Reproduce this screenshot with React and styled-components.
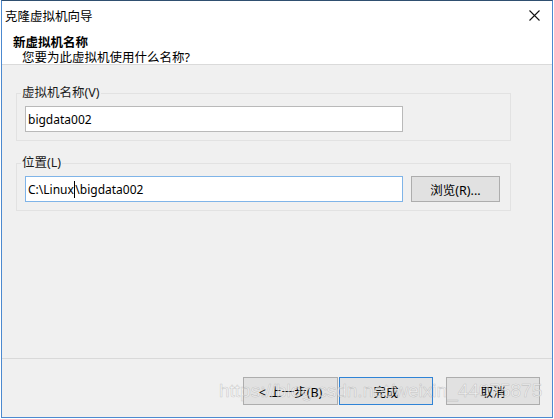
import React from "react";
import styled, { createGlobalStyle } from "styled-components";

const Global = createGlobalStyle`
  html, body { margin: 0; padding: 0; background: #ffffff; }
  body { font-family: "Noto Sans CJK SC", "Noto Sans", sans-serif; }
  * { box-sizing: border-box; }
`;

const cjk = `"Noto Sans", "Noto Sans CJK SC", sans-serif`;

const Window = styled.div`
  position: relative;
  width: 552px;
  height: 418px;
  margin-left: 1px;
  border: 1px solid #4c89cf;
  border-top-color: #2f4f70;
  display: flex;
  flex-direction: column;
  background: #f0f0f0;
  font-family: ${cjk};
  color: #000;
  overflow: hidden;
`;

const TitleBar = styled.div`
  height: 29px;
  flex: none;
  background: #fff;
  display: flex;
  align-items: center;
  justify-content: space-between;
  padding: 0 10px 1px 3px;
  font-size: 12.5px;
`;

const CloseBtn = styled.div`
  width: 12px;
  height: 12px;
  display: flex;
  align-items: center;
  justify-content: center;
  margin-right: 2px;
`;

const Header = styled.div`
  height: 35px;
  flex: none;
  background: #fff;
  border-bottom: 1px solid #dadada;
  display: flex;
  flex-direction: column;
  padding: 5px 0 0 11px;
`;

const HeadTitle = styled.div`
  font-size: 12.5px;
  font-weight: 700;
  line-height: 15px;
`;

const HeadSub = styled.div`
  font-size: 12.5px;
  line-height: 15px;
  padding-left: 9px;
`;

const Body = styled.div`
  flex: 1;
  display: flex;
  flex-direction: column;
  gap: 15px;
  padding: 21px 0 0 14px;
`;

const Group = styled.fieldset`
  margin: 0;
  width: 495px;
  border: 1px solid #e2e2e2;
  padding: 6px 8px 8px 8px;
  display: flex;
  align-items: center;
  gap: 8px;
`;

const Legend = styled.legend`
  font-size: 12.5px;
  line-height: 14px;
  padding: 0 1px;
  margin-left: -4px;
  color: #1a1a1a;
`;

const Input = styled.div`
  width: 378px;
  height: 26px;
  background: #fff;
  border: 1px solid ${(p) => (p.$focused ? "#7fb4e8" : "#b9b9b9")};
  padding: 0 2px;
  display: flex;
  align-items: center;
  font-family: "Noto Sans", sans-serif;
  font-size: 12px;
  white-space: pre;
`;

const Caret = styled.span`
  display: inline-block;
  width: 1px;
  height: 17px;
  background: #000;
  margin: 0 0 0 0.5px;
`;

const Button = styled.div`
  width: ${(p) => p.$w || 94}px;
  height: 28px;
  flex: none;
  background: #e1e1e1;
  border: 1px solid ${(p) => (p.$default ? "#2f83d6" : "#adadad")};
  display: flex;
  align-items: center;
  justify-content: center;
  font-size: 12.5px;
  font-family: ${cjk};
`;

const BrowseButton = styled(Button)`
  height: 26px;
`;

const Footer = styled.div`
  height: 59px;
  flex: none;
  border-top: 1px solid #d9d9d9;
  display: flex;
  justify-content: flex-end;
  align-items: flex-start;
  padding: 18px 12px 0 0;
`;

const ButtonPair = styled.div`
  display: flex;
  gap: 1px;
  margin-right: 13px;
`;

const Watermark = styled.div`
  position: absolute;
  left: 217px;
  top: 379px;
  font-family: "Liberation Sans", Arial, sans-serif;
  font-size: 19px;
  color: rgba(255, 255, 255, 0.55);
  -webkit-text-stroke: 0.6px rgba(150, 150, 150, 0.45);
  pointer-events: none;
  white-space: nowrap;
`;

export default function App() {
  return (
    <>
      <Global />
      <Window>
        <TitleBar>
          <span>克隆虚拟机向导</span>
          <CloseBtn>
            <svg width="11" height="11" viewBox="0 0 11 11">
              <path d="M0.5 0.5 L10.5 10.5 M10.5 0.5 L0.5 10.5" stroke="#111" strokeWidth="1.1" fill="none" />
            </svg>
          </CloseBtn>
        </TitleBar>
        <Header>
          <HeadTitle>新虚拟机名称</HeadTitle>
          <HeadSub>您要为此虚拟机使用什么名称?</HeadSub>
        </Header>
        <Body>
          <Group>
            <Legend>虚拟机名称(V)</Legend>
            <Input>bigdata002</Input>
          </Group>
          <Group>
            <Legend>位置(L)</Legend>
            <Input $focused>
              C:\Linux<Caret />\bigdata002
            </Input>
            <BrowseButton $w={89}>浏览(R)...</BrowseButton>
          </Group>
        </Body>
        <Footer>
          <ButtonPair>
            <Button $w={95}>&lt; 上一步(B)</Button>
            <Button $w={94} $default>完成</Button>
          </ButtonPair>
          <Button $w={94}>取消</Button>
        </Footer>
        <Watermark>https://blog.csdn.net/weixin_44075875</Watermark>
      </Window>
    </>
  );
}
